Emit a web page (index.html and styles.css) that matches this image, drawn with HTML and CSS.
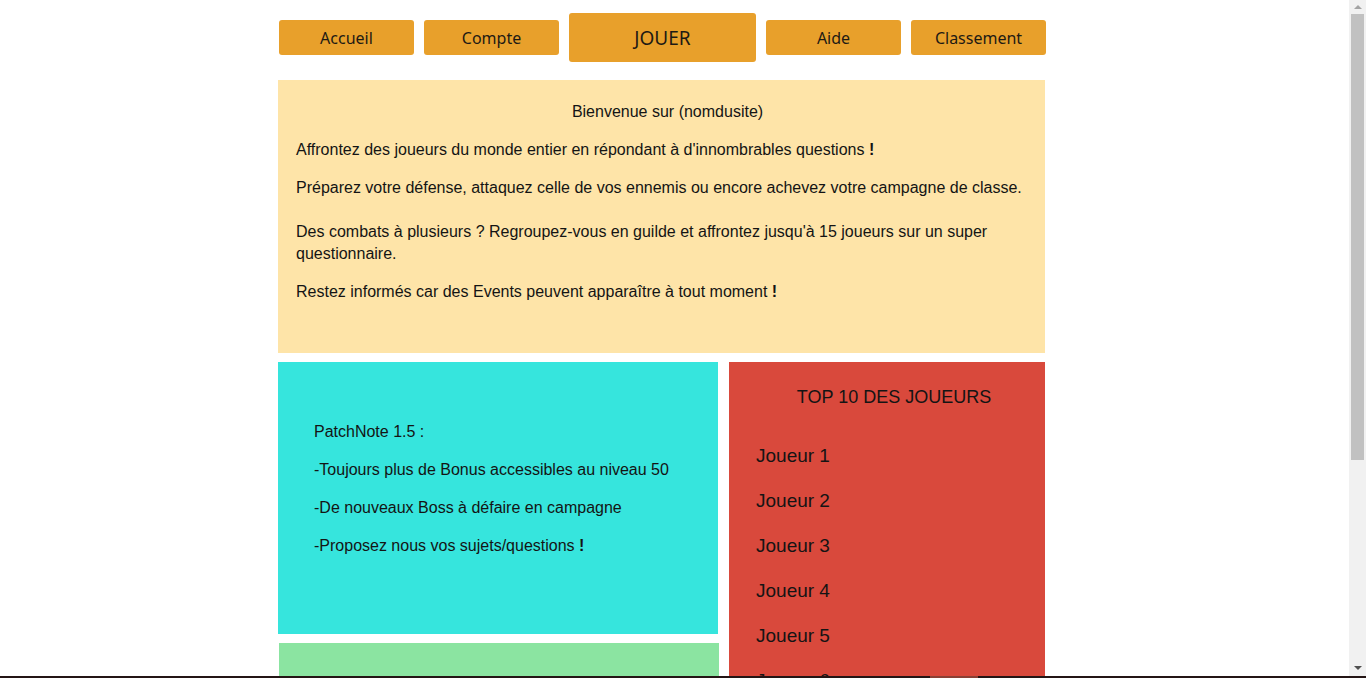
FILE: index.html
```html
<!DOCTYPE html>
<html lang="fr">
<head>
<meta charset="utf-8">
<title>(nomdusite)</title>
<link rel="stylesheet" href="styles.css">
</head>
<body>
<div class="page">
  <nav class="nav">
    <a class="btn" href="#">Accueil</a>
    <a class="btn" href="#">Compte</a>
    <a class="btn btn-play" href="#">JOUER</a>
    <a class="btn" href="#">Aide</a>
    <a class="btn" href="#">Classement</a>
  </nav>

  <section class="intro">
    <p class="intro-title">Bienvenue sur (nomdusite)</p>
    <p>Affrontez des joueurs du monde entier en répondant à d'innombrables questions <b>!</b></p>
    <p>Préparez votre défense, attaquez celle de vos ennemis ou encore achevez votre campagne de classe.</p>
    <p class="spaced">Des combats à plusieurs ? Regroupez-vous en guilde et affrontez jusqu'à 15 joueurs sur un super questionnaire.</p>
    <p>Restez informés car des Events peuvent apparaître à tout moment <b>!</b></p>
  </section>

  <div class="grid">
    <section class="patch">
      <p>PatchNote 1.5 :</p>
      <p>-Toujours plus de Bonus accessibles au niveau 50</p>
      <p>-De nouveaux Boss à défaire en campagne</p>
      <p>-Proposez nous vos sujets/questions <b>!</b></p>
    </section>
    <section class="top">
      <h2 class="top-title">TOP 10 DES JOUEURS</h2>
      <ul class="players">
        <li>Joueur 1</li>
        <li>Joueur 2</li>
        <li>Joueur 3</li>
        <li>Joueur 4</li>
        <li>Joueur 5</li>
        <li>Joueur 6</li>
        <li>Joueur 7</li>
        <li>Joueur 8</li>
        <li>Joueur 9</li>
        <li>Joueur 10</li>
      </ul>
    </section>
    <section class="green"></section>
  </div>
</div>
<div class="scrollbar">
  <span class="arrow arrow-up"></span>
  <span class="thumb"></span>
  <span class="arrow arrow-down"></span>
</div>
<div class="taskbar"><span class="taskbar-item"></span></div>
</body>
</html>
```

FILE: styles.css
```css
html, body {
  margin: 0;
  padding: 0;
  background: #ffffff;
}

body {
  font-family: "Liberation Sans", Arial, sans-serif;
  font-size: 16px;
  color: #141414;
}

.page {
  width: 767px;
  margin: 13px 0 40px 278px;
}

.nav {
  display: flex;
  align-items: center;
  gap: 10px;
  padding-left: 1px;
  height: 49px;
}

.btn {
  flex: none;
  display: flex;
  align-items: center;
  justify-content: center;
  width: 135px;
  height: 35px;
  background: #e8a02b;
  border-radius: 3px;
  color: #1e1a14;
  text-decoration: none;
  font-family: "Noto Sans", "Open Sans", sans-serif;
  font-size: 16px;
}

.btn-play {
  width: 187px;
  height: 49px;
  font-size: 19px;
}

.intro {
  box-sizing: border-box;
  margin-top: 18px;
  height: 273px;
  background: #fee4a8;
  padding: 21px 18px 0;
}

.intro p {
  margin: 0 0 16px;
  line-height: 22px;
}

.intro .intro-title {
  text-align: center;
  padding-left: 12px;
}

.intro .spaced {
  margin-top: 22px;
}

.grid {
  display: grid;
  grid-template-columns: 440px 316px;
  grid-template-rows: 272px 200px;
  column-gap: 11px;
  row-gap: 9px;
  margin-top: 9px;
}

.patch {
  box-sizing: border-box;
  background: #36e5dd;
  padding: 59px 36px 0;
}

.patch p {
  margin: 0 0 16px;
  line-height: 22px;
}

.top {
  grid-row: 1 / span 2;
  grid-column: 2;
  background: #d9493c;
  padding: 25px 0 20px;
}

.top-title {
  margin: 0;
  padding-left: 14px;
  text-align: center;
  font-size: 18px;
  font-weight: normal;
  line-height: 21px;
}

.players {
  list-style: none;
  margin: 37px 0 0;
  padding: 0 0 0 27px;
}

.players li {
  font-size: 19px;
  line-height: 22px;
  margin-bottom: 23px;
}

.green {
  grid-column: 1;
  grid-row: 2;
  background: #8be4a1;
  margin-left: 1px;
  margin-right: -1px;
}

.scrollbar {
  position: fixed;
  top: 0;
  right: 0;
  bottom: 0;
  width: 17px;
  background: #f1f1f1;
}

.thumb {
  position: absolute;
  left: 2px;
  right: 2px;
  top: 14px;
  height: 446px;
  background: #c1c1c1;
}

.arrow {
  position: absolute;
  left: 5px;
  width: 0;
  height: 0;
  border-left: 4px solid transparent;
  border-right: 4px solid transparent;
}

.arrow-up {
  top: 5px;
  border-bottom: 4px solid #a3a3a3;
}

.arrow-down {
  bottom: 8px;
  border-top: 4px solid #505050;
}

.taskbar {
  position: fixed;
  left: 0;
  right: 0;
  bottom: 0;
  height: 2px;
  background: #241515;
}

.taskbar-item {
  position: absolute;
  left: 930px;
  width: 48px;
  top: 0;
  height: 2px;
  background: #8a4035;
}
```
